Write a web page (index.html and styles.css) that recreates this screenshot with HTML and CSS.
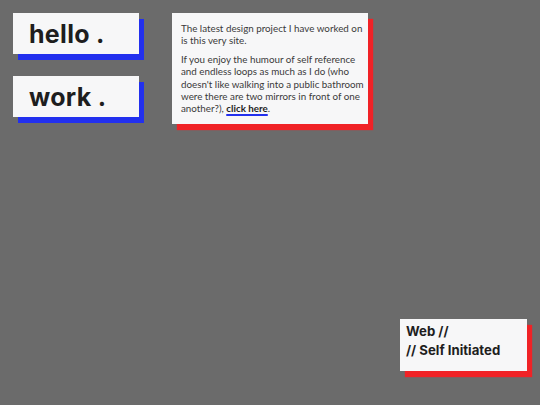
FILE: index.html
```html
<!DOCTYPE html>
<html>
<head>
<meta charset="utf-8">
<link rel="stylesheet" href="styles.css">
</head>
<body>
<div class="page">
  <div class="top">
    <div class="left">
      <div class="tag blue"><span>hello .</span></div>
      <div class="tag blue"><span>work .</span></div>
    </div>
    <div class="card red">
      <p>The latest design project I have worked on<br>is this very site.</p>
      <p>If you enjoy the humour of self reference<br>and endless loops as much as I do (who<br>doesn't like walking into a public bathroom<br>were there are two mirrors in front of one<br>another?), <a class="link" href="#">click here</a>.</p>
    </div>
  </div>
  <div class="meta red">
    <div>Web //</div>
    <div>// Self Initiated</div>
  </div>
</div>
</body>
</html>
```
FILE: styles.css
```css
* { box-sizing: border-box; }
html, body { margin: 0; padding: 0; }
body { background: #6b6b6b; width: 540px; height: 405px; overflow: hidden; }
.page {
  height: 405px;
  display: flex;
  flex-direction: column;
  justify-content: space-between;
  padding: 13px 13px 34px 13px;
}
.top { display: flex; gap: 33px; align-items: flex-start; }
.left { display: flex; flex-direction: column; gap: 22px; }
.blue { box-shadow: 5px 6px 0 #2230ee; }
.red { box-shadow: 5px 6px 1px #f02226; }
.tag {
  width: 126px;
  height: 41px;
  background: #f7f7f8;
  display: flex;
  align-items: center;
  padding-left: 16px;
  font-family: "Inter", sans-serif;
  font-weight: 700;
  font-size: 25px;
  color: #1e1e1e;
  letter-spacing: 0.3px;
}
.card {
  width: 196px;
  height: 111px;
  background: #f7f7f8;
  padding: 9px 0 0 9px;
  font-family: "Lato", sans-serif;
  font-size: 9.8px;
  line-height: 12.3px;
  color: #3a3a3a;
  white-space: nowrap;
}
.card p { margin: 0 0 6.5px 0; }
.link {
  color: #1e1e1e;
  font-weight: 700;
  text-decoration: underline;
  text-decoration-color: #2230ee;
  text-decoration-thickness: 1.5px;
  text-underline-offset: 2px;
}
.meta {
  align-self: flex-end;
  width: 127px;
  height: 52px;
  background: #f7f7f8;
  padding: 3px 4px 0 6px;
  font-family: "Inter", sans-serif;
  font-weight: 700;
  font-size: 13.2px;
  line-height: 19px;
  color: #1e1e1e;
}
```
